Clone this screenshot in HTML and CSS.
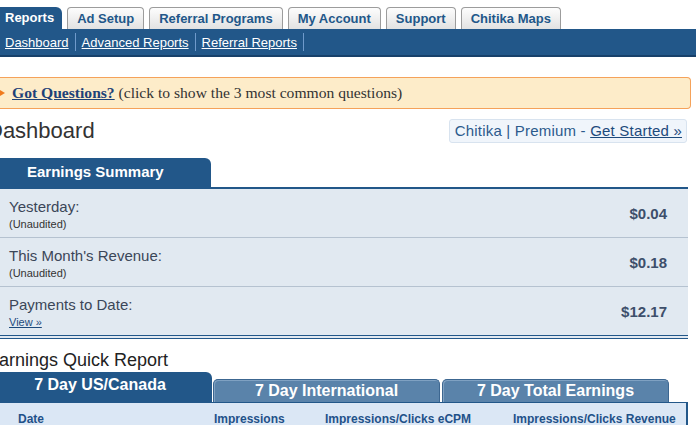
FILE: index.html
```html
<!DOCTYPE html>
<html lang="en">
  <head>
    <meta charset="UTF-8" />
    <title>Chitika Dashboard</title>
    <link rel="stylesheet" href="styles.css">
  </head>

  <body>
    <nav class="topnav">
      <ul class="tabs">
        <li class="active"><a href="#">Reports</a></li>
        <li><a href="#">Ad Setup</a></li>
        <li><a href="#">Referral Programs</a></li>
        <li><a href="#">My Account</a></li>
        <li><a href="#">Support</a></li>
        <li><a href="#">Chitika Maps</a></li>
      </ul>
      <ul class="subnav">
        <li><a href="#">Dashboard</a></li>
        <li><a href="#">Advanced Reports</a></li>
        <li><a href="#">Referral Reports</a></li>
      </ul>
    </nav>

    <div class="questions">
      <span class="arrow"></span>
      <a href="#">Got Questions?</a> (click to show the 3 most common questions)
    </div>

    <main class="container">
      <div class="title-row">
        <h1>Dashboard</h1>
        <div class="premium">Chitika | Premium - <a href="#">Get Started &raquo;</a></div>
      </div>

      <div class="box-tab">Earnings Summary</div>
      <div class="summary">
        <div class="row">
          <div class="label">Yesterday:<small>(Unaudited)</small></div>
          <div class="value">$0.04</div>
        </div>
        <div class="row">
          <div class="label">This Month's Revenue:<small>(Unaudited)</small></div>
          <div class="value">$0.18</div>
        </div>
        <div class="row">
          <div class="label">Payments to Date:<small><a href="#">View &raquo;</a></small></div>
          <div class="value">$12.17</div>
        </div>
      </div>

      <h2>Earnings Quick Report</h2>
      <div class="report-tabs">
        <div class="rtab active">7 Day US/Canada</div>
        <div class="rtab">7 Day International</div>
        <div class="rtab">7 Day Total Earnings</div>
      </div>
      <div class="report">
        <div class="report-head">
          <span>Date</span>
          <span>Impressions</span>
          <span>Impressions/Clicks eCPM</span>
          <span>Impressions/Clicks Revenue</span>
        </div>
      </div>
    </main>
  </body>
</html>
```

FILE: styles.css
```css
body {
  margin: 0;
  width: 696px;
  overflow: hidden;
  font-family: "Liberation Sans", Arial, sans-serif;
  background: #fff;
}

ul {
  list-style: none;
  margin: 0;
  padding: 0;
}

a {
  color: #1d4a7c;
}

/* top navigation */
.tabs {
  display: flex;
  gap: 5px;
  align-items: flex-end;
  padding-top: 7px;
}

.tabs li {
  height: 22px;
  box-sizing: border-box;
  background: linear-gradient(#fdfdfd, #e2e2e2);
  border: 1px solid #9c9c9c;
  border-bottom: none;
  border-radius: 4px 4px 0 0;
  padding: 0 9px;
}

.tabs li.active {
  background: #225789;
  border: none;
  border-radius: 0 6px 0 0;
  padding: 0 8px 0 5px;
}

.tabs a {
  display: block;
  line-height: 22px;
  font-size: 13px;
  font-weight: bold;
  color: #225789;
  text-decoration: none;
}

.tabs li.active a {
  color: #fff;
}

.subnav {
  display: flex;
  height: 26px;
  align-items: center;
  background: #225789;
  border-bottom: 2px solid #17406a;
  padding-left: 5px;
}

.subnav li {
  border-right: 1px solid #6f9acb;
  padding: 0 6px;
  line-height: 17px;
}

.subnav li:first-child {
  padding-left: 0;
}

.subnav a {
  color: #fff;
  font-size: 13px;
}

/* questions bar */
.questions {
  position: relative;
  margin-top: 20px;
  width: 678px;
  height: 30px;
  line-height: 30px;
  background: #fdecc9;
  border: 1px solid #f5a25a;
  border-left: none;
  border-radius: 0 4px 4px 0;
  padding-left: 12px;
  font-family: "Liberation Serif", Georgia, serif;
  font-size: 15.6px;
  color: #333;
}

.questions a {
  font-weight: bold;
  color: #1d4278;
}

.arrow {
  position: absolute;
  left: 0;
  top: 12px;
  border-left: 5px solid #f07a1c;
  border-top: 3px solid transparent;
  border-bottom: 3px solid transparent;
}

/* content */
.container {
  width: 688px;
}

.title-row {
  display: flex;
  justify-content: space-between;
  align-items: center;
  margin-top: 10px;
  height: 24px;
}

h1 {
  margin: 0 0 0 -13px;
  font-size: 22px;
  font-weight: normal;
  color: #333;
}

.premium {
  margin-right: 1px;
  padding: 0 4px 0 5px;
  line-height: 22px;
  background: #f0f5fb;
  border: 1px solid #d8e3ef;
  border-radius: 3px;
  font-size: 15px;
  letter-spacing: 0.2px;
  color: #2c5a8c;
}

.premium a {
  color: #1d4a7c;
}

.box-tab {
  margin-top: 15px;
  width: 184px;
  height: 29px;
  line-height: 27px;
  padding-left: 27px;
  background: #225789;
  border-radius: 0 6px 0 0;
  color: #fff;
  font-size: 15px;
  font-weight: bold;
}

.summary {
  background: #e1e9f1;
  border-top: 2px solid #225789;
  border-bottom: 4px double #225789;
}

.row {
  display: flex;
  justify-content: space-between;
  align-items: center;
  height: 48px;
  padding: 0 21px 0 9px;
  border-top: 1px solid #b5c2d0;
}

.row:first-child {
  border-top: none;
}

.label {
  font-size: 15px;
  color: #3b4658;
  padding-top: 2px;
}

.label small {
  display: block;
  margin-top: 3px;
  font-size: 11px;
  color: #333;
}

.label small a {
  color: #1d4a7c;
}

.value {
  font-size: 15px;
  font-weight: bold;
  color: #3d4f6b;
}

h2 {
  margin: 11px 0 2px -13px;
  font-size: 18px;
  line-height: 20px;
  font-weight: normal;
  color: #222;
}

.report-tabs {
  display: flex;
  align-items: flex-end;
  gap: 2px;
  height: 30px;
}

.rtab {
  width: 227px;
  height: 23px;
  box-sizing: border-box;
  background: #5a83aa;
  border: 1px solid #3c6690;
  border-bottom: none;
  border-radius: 5px 5px 0 0;
  box-shadow: inset 1px 1px 0 #7fa1c2;
  text-align: center;
  line-height: 22px;
  color: #fff;
  font-size: 16px;
  font-weight: bold;
}

.rtab.active {
  width: 212px;
  height: 30px;
  background: #225789;
  border: none;
  border-radius: 0 6px 0 0;
  box-shadow: none;
  line-height: 26px;
  padding-right: 12px;
  margin-right: -1px;
}

.report {
  border-top: 1px solid #225789;
  border-right: 2px solid #225789;
  background: #dbe7f5;
  height: 40px;
}

.report-head {
  display: grid;
  grid-template-columns: 196px 111px 188px 1fr;
  padding: 9px 0 0 18px;
  font-size: 12px;
  font-weight: bold;
  color: #1f5189;
}
```
